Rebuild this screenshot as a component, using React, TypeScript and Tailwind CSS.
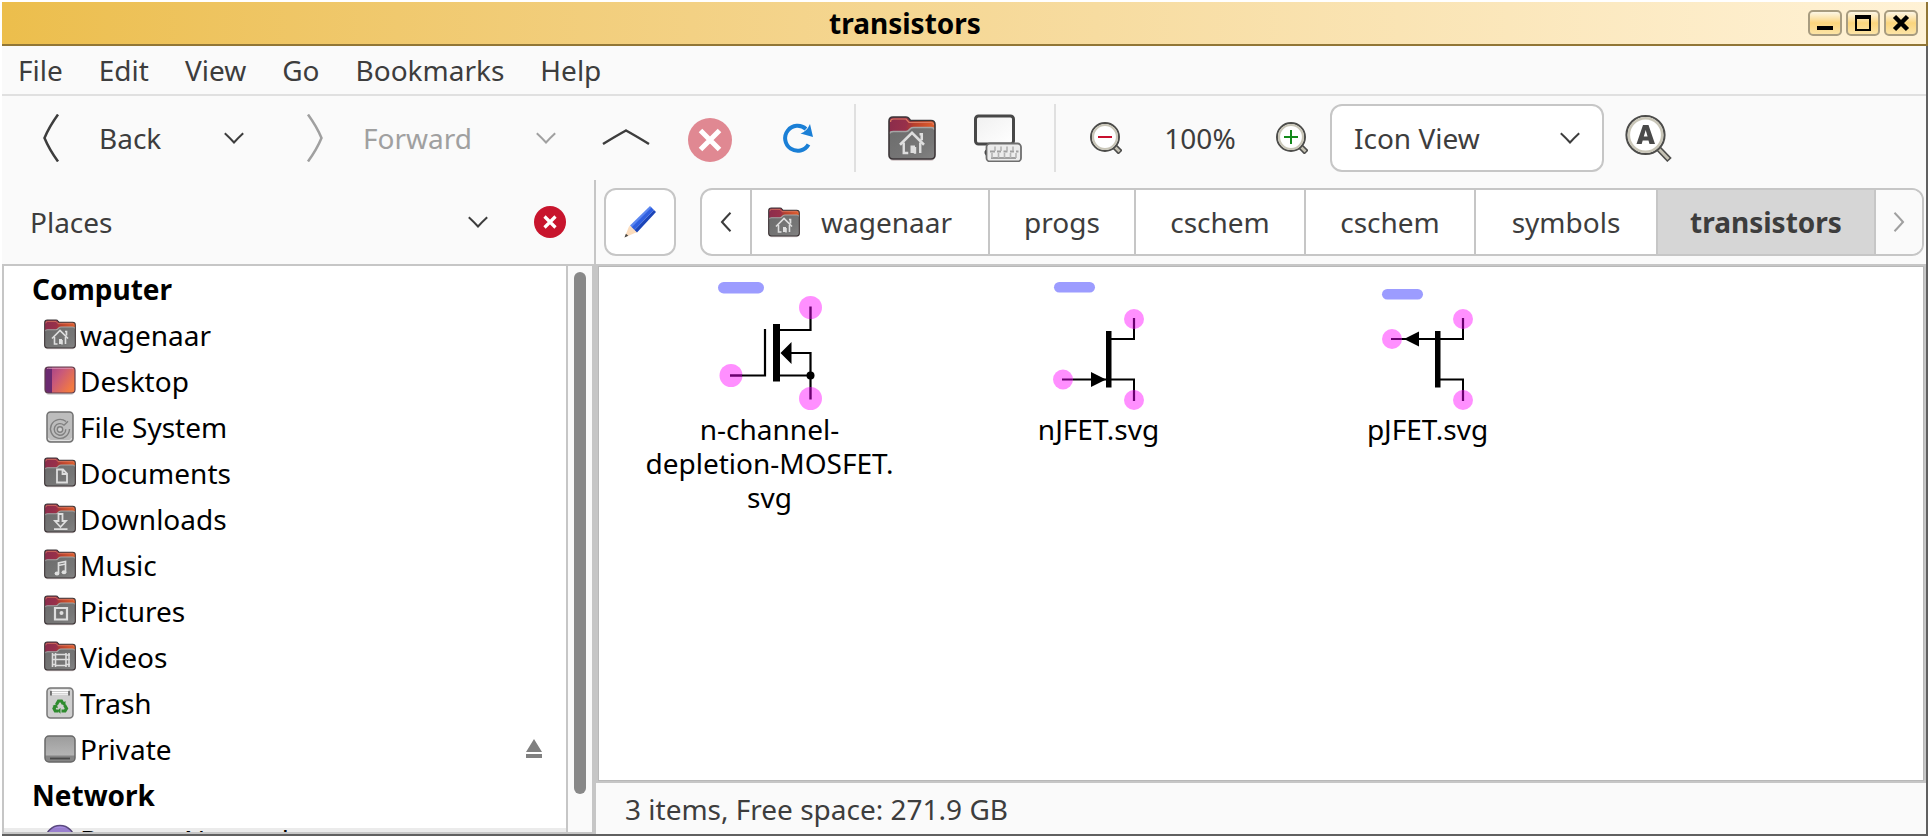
import { Fragment, type ReactNode } from "react";

type Glyph = "home" | "documents" | "downloads" | "music" | "pictures" | "videos";

const glyphs: Record<Glyph, ReactNode> = {
  home: (
    <>
      <path d="M8 18.5 16 10.5 24 18.5M21 11.5h1.5v4" fill="none" stroke="#dedede" strokeWidth="1.7" />
      <path d="M10.5 17v7h3M18 20v4.5M21.5 17v7" fill="none" stroke="#dedede" strokeWidth="1.6" />
      <path d="M15 19h3v5h-3z" fill="#dedede" />
    </>
  ),
  documents: (
    <path d="M13 11.5h6l4 4v9H13zM18.5 11.5v4.5H23" fill="none" stroke="#dedede" strokeWidth="1.8" />
  ),
  downloads: (
    <path d="M14.5 10h4v7H22l-5.500 6-5.500-6h3.500zM10 25.200h13.500" fill="none" stroke="#dedede" strokeWidth="1.800" />
  ),
  music: (
    <>
      <path d="M14.500 23V13l7-1.500V22M14.500 15.500l7-1.500" fill="none" stroke="#dedede" strokeWidth="1.700" />
      <ellipse cx="13" cy="23.500" rx="2.400" ry="2" fill="#dedede" />
      <ellipse cx="20" cy="22.300" rx="2.400" ry="2" fill="#dedede" />
    </>
  ),
  pictures: (
    <>
      <path d="M11 12h12v11.500H11z" fill="none" stroke="#dedede" strokeWidth="2.200" />
      <circle cx="17.500" cy="17" r="2" fill="#dedede" />
    </>
  ),
  videos: (
    <path
      d="M8.500 11v14M25 11v14M11.500 11v14M22 11v14M8 13h4M8 17.500h4M8 22.500h4M22 13h4M22 17.500h4M22 22.500h4M11.500 12.500H22M11.500 23.500H22M11.500 17.500H22"
      fill="none"
      stroke="#dedede"
      strokeWidth="1.600"
    />
  ),
};

function Folder({ glyph, className }: { glyph: Glyph; className: string }) {
  return (
    <svg viewBox="0 0 48 48" className={className} aria-hidden="true">
      <defs>
        <linearGradient id="folder-back" x1="0" x2="1" y1="0" y2="0.200">
          <stop offset="0" stopColor="#8a2c4c" />
          <stop offset="0.400" stopColor="#98304a" />
          <stop offset="0.550" stopColor="#b8402c" />
          <stop offset="1" stopColor="#e2602c" />
        </linearGradient>
        <linearGradient id="folder-front" x1="0" x2="1" y1="0" y2="1">
          <stop offset="0" stopColor="#6c6c6c" />
          <stop offset="0.700" stopColor="#777" />
          <stop offset="1" stopColor="#838383" />
        </linearGradient>
      </defs>
      <rect x="2" y="40" width="44" height="7" rx="3" fill="#d9cfd0" />
      <path d="M1 7q0-4 4-4h13q2 0 3 1.500l1.500 2H43q4 0 4 4V41q0 4-4 4H5q-4 0-4-4z" fill="url(#folder-back)" />
      <path d="M2.500 8q0-3 3-3H18l3 3.500h22q2.500 0 2.500 2.500" fill="none" stroke="#dd7b62" strokeWidth="1.200" />
      <path d="M1 21q0-3.500 4-3.500h13q2 0 3.500-2l1-1q1-1 3-1H43q4 0 4 3.500V41q0 4-4 4H5q-4 0-4-4z" fill="url(#folder-front)" />
      <path d="M1.500 20q0-2.500 4-2.500h12.500q2 0 3.500-2l1-1q1-1 3-1H43q3.500 0 3.500 2.500" fill="none" stroke="#a5a5a5" strokeWidth="1.600" />
      <path d="M1 7q0-4 4-4h13q2 0 3 1.500l1.500 2H43q4 0 4 4V41q0 4-4 4H5q-4 0-4-4z" fill="none" stroke="#3c3638" strokeWidth="1.600" />
      <g transform="translate(0 3) scale(1.500)">{glyphs[glyph]}</g>
    </svg>
  );
}

function DesktopIcon() {
  return (
    <svg viewBox="0 0 32 32" className="size-8" aria-hidden="true">
      <defs>
        <linearGradient id="desk" x1="0" x2="1" y1="0" y2="0.600">
          <stop offset="0" stopColor="#9a3a8c" />
          <stop offset="0.500" stopColor="#c9597a" />
          <stop offset="1" stopColor="#f27a42" />
        </linearGradient>
      </defs>
      <rect x="2" y="24" width="28" height="6" rx="3" fill="#d8d8d8" />
      <rect x="1" y="2" width="30" height="26" rx="3.500" fill="url(#desk)" />
      <path d="M4 2h4v26H4q-3 0-3-3V5q0-3 3-3z" fill="#6b2a70" />
      <path d="M3 4q.5-.8 1.500-.8h23q1 0 1.500.8" fill="none" stroke="#d998b8" strokeWidth="1" />
      <rect x="1" y="2" width="30" height="26" rx="3.500" fill="none" stroke="#5f3d4d" strokeWidth="1.200" />
    </svg>
  );
}

function DiskIcon() {
  return (
    <svg viewBox="0 0 32 32" className="size-8" aria-hidden="true">
      <rect x="3" y="1" width="26" height="30" rx="3.500" fill="#bdbdbd" stroke="#707070" strokeWidth="1.500" />
      <path d="M4.500 27q0 2.500 2.500 2.500h18q2.500 0 2.500-2.500" fill="none" stroke="#e2e2e2" />
      <path d="M22 10.500a9.500 9.500 0 1 0 3.500 7.500M20 14.200a5.800 5.800 0 1 0 1.800 4M20 14.200l4-4" fill="none" stroke="#808080" strokeWidth="1.400" />
      <circle cx="16" cy="18.500" r="2.700" fill="#d0d0d0" stroke="#808080" strokeWidth="1.400" />
    </svg>
  );
}

function TrashIcon() {
  return (
    <svg viewBox="0 0 32 32" className="size-8" aria-hidden="true">
      <rect x="3" y="1" width="26" height="30" rx="3.500" fill="#cfcfcf" stroke="#777" strokeWidth="1.500" />
      <path d="M7.500 2.500h17V8h-17z" fill="#fdfdfd" />
      <path d="M7 4v4.500M25 4v4.500" stroke="#444" strokeWidth="1.300" />
      <path d="M8 4.500h16M8 6.800h16" stroke="#bbb" strokeWidth="0.800" />
      <g fill="none" stroke="#2e8b2e" strokeWidth="3.200">
        <path d="M12.500 17.500l2-3.500h3l1.500 2.500" />
        <path d="M20.500 18l2 3.500-1.500 2.500h-3.500" />
        <path d="M14.500 24h-3.200l-1.300-2.500 1.300-2.500" />
      </g>
      <g fill="#2e8b2e">
        <path d="M21.500 14v5l-4.500-2z" />
        <path d="M16.500 20.800v6l-3-3z" />
        <path d="M8.500 19l4.500-2.200.8 4.500z" />
      </g>
    </svg>
  );
}

function DriveIcon() {
  return (
    <svg viewBox="0 0 32 32" className="size-8" aria-hidden="true">
      <defs>
        <linearGradient id="drive" x1="0" x2="0" y1="0" y2="1">
          <stop offset="0" stopColor="#9c9c9c" />
          <stop offset="1" stopColor="#bdbdbd" />
        </linearGradient>
      </defs>
      <rect x="1" y="3" width="30" height="26" rx="4" fill="url(#drive)" />
      <path d="M1 22.500h30V25q0 4-4 4H5q-4 0-4-4z" fill="#858585" />
      <path d="M6 25.500h20" stroke="#4a4a4a" strokeWidth="1.800" />
      <rect x="1" y="3" width="30" height="26" rx="4" fill="none" stroke="#686868" strokeWidth="1.500" />
    </svg>
  );
}

function NetworkIcon() {
  return (
    <svg viewBox="0 0 32 32" className="size-8" aria-hidden="true">
      <circle cx="16" cy="16" r="14.500" fill="#a68ae0" stroke="#5b4a80" strokeWidth="1.500" />
      <path d="M3 14h26M3 21h26M16 8v22" stroke="#c3aef0" strokeWidth="1.500" />
    </svg>
  );
}

function Down({ className = "" }: { className?: string }) {
  return (
    <svg viewBox="0 0 20 12" className={`h-3 w-5 shrink-0 ${className}`} aria-hidden="true">
      <path d="M.8 1.200Q6 6 10 10.500 14 6 19.200 1.200" fill="none" stroke="currentColor" strokeWidth="2" />
    </svg>
  );
}

function Magnifier({ children }: { children: ReactNode }) {
  return (
    <svg viewBox="0 0 32 32" className="size-8" aria-hidden="true">
      <path d="M24 24l6.500 6.500" stroke="#4c4c4a" strokeWidth="6" />
      <path d="M23 23l6.500 6.500" stroke="#c5c2b4" strokeWidth="2.600" />
      <circle cx="15" cy="15" r="14" fill="#fff" stroke="#4c4c4a" strokeWidth="2" />
      <circle cx="15" cy="15" r="12" fill="none" stroke="#c9c6b8" strokeWidth="2.200" />
      {children}
    </svg>
  );
}

const places: { name: string; icon: ReactNode; eject?: boolean }[] = [
  { name: "wagenaar", icon: <Folder glyph="home" className="mb-0.5 size-8" /> },
  { name: "Desktop", icon: <DesktopIcon /> },
  { name: "File System", icon: <DiskIcon /> },
  { name: "Documents", icon: <Folder glyph="documents" className="mb-0.5 size-8" /> },
  { name: "Downloads", icon: <Folder glyph="downloads" className="mb-0.5 size-8" /> },
  { name: "Music", icon: <Folder glyph="music" className="mb-0.5 size-8" /> },
  { name: "Pictures", icon: <Folder glyph="pictures" className="mb-0.5 size-8" /> },
  { name: "Videos", icon: <Folder glyph="videos" className="mb-0.5 size-8" /> },
  { name: "Trash", icon: <TrashIcon /> },
  { name: "Private", icon: <DriveIcon />, eject: true },
];

const crumbs = [
  { name: "progs", width: "w-[146px]" },
  { name: "cschem", width: "w-[170px]" },
  { name: "cschem", width: "w-[170px]" },
  { name: "symbols", width: "w-[182px]" },
];

const pin = "#ff8fff";

const files: { lines: string[]; art: ReactNode }[] = [
  {
    lines: ["n-channel-", "depletion-MOSFET.", "svg"],
    art: (
      <>
        <rect x="12" y="0" width="46" height="11.500" rx="5.700" fill="#9c9cff" />
        <g fill={pin}>
          <circle cx="104.500" cy="25.500" r="11.500" />
          <circle cx="25" cy="93.500" r="11.500" />
          <circle cx="104.500" cy="116.500" r="11.500" />
        </g>
        <path d="M59 47v46.500H36M74 48h30.500V37M85 71h19.500v34M74 93.500h30.500" fill="none" stroke="#000" strokeWidth="2.200" />
        <path d="M36 93.500H24M104.500 37V24.500M104.500 105v12.500" stroke="#6b0070" strokeWidth="2.400" />
        <path d="M67 42h7v57.500h-7zM74.500 71l11-11v22z" />
        <circle cx="104.500" cy="93.500" r="4" />
      </>
    ),
  },
  {
    lines: ["nJFET.svg"],
    art: (
      <>
        <rect x="19" y="0" width="41" height="10.500" rx="5.200" fill="#9c9cff" />
        <g fill={pin}>
          <circle cx="99" cy="37" r="10" />
          <circle cx="28" cy="97.500" r="10" />
          <circle cx="99" cy="118" r="10" />
        </g>
        <path d="M38 97.500h61V108M76 57h23V47" fill="none" stroke="#000" strokeWidth="2" />
        <path d="M27 97.500h11M99 47V36M99 108v11" stroke="#6b0070" strokeWidth="2.200" />
        <path d="M71 49h5.500v56.500H71zM56 90v15l15-7.500z" />
      </>
    ),
  },
  {
    lines: ["pJFET.svg"],
    art: (
      <>
        <rect x="18" y="7" width="41" height="10.500" rx="5.200" fill="#9c9cff" />
        <g fill={pin}>
          <circle cx="99" cy="37" r="10" />
          <circle cx="28" cy="57" r="10" />
          <circle cx="99" cy="118" r="10" />
        </g>
        <path d="M38 57h61V47M76 97.500h23V108" fill="none" stroke="#000" strokeWidth="2" />
        <path d="M27 57h11M99 47V36M99 108v11" stroke="#6b0070" strokeWidth="2.200" />
        <path d="M71 49h5.500v56.500H71zM55 49.500v15L40 57z" />
      </>
    ),
  },
];

const windowButton =
  "flex h-[26px] w-[34px] items-center justify-center rounded-[5px] border-2 border-[#a89c80] bg-linear-to-b from-[#fdf6e4] via-[#fbd57c] to-[#fce4a6]";

export default function App() {
  return (
    <div className="flex h-screen min-w-[1100px] flex-col overflow-hidden bg-white pt-0.5 pl-0.5 font-['Noto_Sans',sans-serif] text-[28px] leading-[34px] text-[#3d3d3d]">
      <header className="flex h-11 shrink-0 items-center border-r-2 border-b-2 border-[#917636] bg-linear-to-r from-[#ecbe4c] to-[#fff2d6] pr-2">
        <h1 className="flex-1 text-center font-bold text-black">transistors</h1>
        <div className="flex gap-1">
          <button type="button" aria-label="Minimize" className={windowButton}>
            <svg viewBox="0 0 18 18" className="size-[18px]">
              <path d="M1 12h16v4H1z" />
            </svg>
          </button>
          <button type="button" aria-label="Maximize" className={windowButton}>
            <svg viewBox="0 0 18 18" className="size-[18px]">
              <path d="M1 1h16v16H1zM3 5v10h12V5z" fillRule="evenodd" />
            </svg>
          </button>
          <button type="button" aria-label="Close" className={windowButton}>
            <svg viewBox="0 0 18 18" className="size-[18px]">
              <path d="M2.500 2.500l13 13M15.500 2.500l-13 13" stroke="#000" strokeWidth="4.500" />
            </svg>
          </button>
        </div>
      </header>

      <div className="flex min-h-0 flex-1 flex-col border-r-2 border-b-2 border-[#606060] bg-[#fafafa]">
        <nav className="flex h-[50px] shrink-0 items-center gap-9 border-b-2 border-[#e0e0e0] pl-4">
          {["File", "Edit", "View", "Go", "Bookmarks", "Help"].map((item) => (
            <button key={item} type="button">
              {item}
            </button>
          ))}
        </nav>

        <div className="flex h-[84px] shrink-0 items-center">
          <button type="button" className="flex h-full w-[196px] items-center gap-6 pl-[25px]">
            <svg viewBox="0 0 48 48" className="size-12" aria-hidden="true">
              <path d="M31 .5Q22 13 17.500 24 22 35 31 47.500" fill="none" stroke="currentColor" strokeWidth="2.500" />
            </svg>
            Back
          </button>
          <button type="button" aria-label="Back history" className="flex h-full w-[72px] items-center justify-center">
            <Down />
          </button>
          <button type="button" className="flex h-full w-[240px] items-center gap-6 pl-[21px] text-[#a0a0a0]">
            <svg viewBox="0 0 48 48" className="size-12" aria-hidden="true">
              <path d="M17 .5Q26 13 30.500 24 26 35 17 47.500" fill="none" stroke="currentColor" strokeWidth="2.500" />
            </svg>
            Forward
          </button>
          <button type="button" aria-label="Forward history" className="flex h-full w-[72px] items-center justify-center text-[#a0a0a0]">
            <Down />
          </button>
          <button type="button" aria-label="Up" className="flex h-full w-[88px] items-center justify-center">
            <svg viewBox="0 0 48 48" className="size-12" aria-hidden="true">
              <path d="M1 30Q14 22 24 16.500 34 22 47 30" fill="none" stroke="currentColor" strokeWidth="2.500" />
            </svg>
          </button>
          <button type="button" aria-label="Stop" className="flex h-full w-20 items-center justify-center">
            <svg viewBox="0 0 48 48" className="size-12" aria-hidden="true">
              <circle cx="24" cy="26" r="22" fill="#e08892" />
              <path d="M14.500 16.500l19 19M33.500 16.500l-19 19" stroke="#fff" strokeWidth="5" />
            </svg>
          </button>
          <button type="button" aria-label="Reload" className="flex h-full w-24 items-center justify-center">
            <svg viewBox="0 0 32 32" className="size-8" aria-hidden="true">
              <path d="M26.500 22.500A12.500 12.500 0 1 1 24 7" fill="none" stroke="#1a7fd6" strokeWidth="4" />
              <path d="M28 2l3 13-12.500-3.500q6-1.500 9.500-9.500z" fill="#1a7fd6" />
            </svg>
          </button>
          <div className="mx-2 h-[68px] w-0.5 bg-[#e0e0e0]" />
          <button type="button" aria-label="Home" className="flex h-full w-24 items-center justify-center">
            <Folder glyph="home" className="size-12" />
          </button>
          <button type="button" aria-label="Computer" className="flex h-full w-[76px] items-center justify-center">
            <svg viewBox="0 0 48 48" className="size-12" aria-hidden="true">
              <defs>
                <linearGradient id="screen" x1="0" x2="1" y1="0" y2="1">
                  <stop offset="0" stopColor="#f0f0f0" />
                  <stop offset="1" stopColor="#fff" />
                </linearGradient>
              </defs>
              <rect x="1.500" y="2" width="38" height="28" rx="3" fill="url(#screen)" stroke="#474747" strokeWidth="3" />
              <path d="M14 36q-4 1.500-1 5" fill="none" stroke="#333" strokeWidth="2.500" />
              <rect x="12.500" y="29.500" width="34.500" height="18" rx="3.500" fill="#ececec" stroke="#6e6e6e" strokeWidth="1.800" />
              <path d="M16 37.500h5M23 37.500h4M29.500 37.500h4M36 37.500h4M42 37.500h2.500M17 44h25" stroke="#a0a0a0" strokeWidth="1.800" />
              <path d="M21 32.500v4.500M27 32.500v4.500M33 32.500v4.500M39 32.500v4.500M18 39v5M24.500 39v5M30.500 39v5M36.500 39v5M42 39v5" stroke="#b4b4b4" strokeWidth="1.600" />
            </svg>
          </button>
          <div className="mr-[6px] ml-[18px] h-[68px] w-0.5 bg-[#e0e0e0]" />
          <button type="button" aria-label="Zoom out" className="flex h-full w-[88px] items-center justify-center">
            <Magnifier>
              <path d="M8 15h14" stroke="#c8102e" strokeWidth="2" />
            </Magnifier>
          </button>
          <button type="button" className="w-[100px] text-center">
            100%
          </button>
          <button type="button" aria-label="Zoom in" className="ml-1 flex h-full w-[76px] items-center justify-center">
            <Magnifier>
              <path d="M8 15h14M15 8v14" stroke="#138a1c" strokeWidth="2" />
            </Magnifier>
          </button>
          <div className="relative">
            <select
              aria-label="View mode"
              className="h-[68px] w-[274px] appearance-none rounded-[12px] border-2 border-[#c6c6c6] bg-white pl-[22px]"
            >
              <option>Icon View</option>
              <option>List View</option>
              <option>Compact View</option>
            </select>
            <Down className="pointer-events-none absolute top-7 right-6" />
          </div>
          <button type="button" aria-label="Search" className="flex h-full w-[88px] items-center justify-center">
            <svg viewBox="0 0 48 48" className="size-12" aria-hidden="true">
              <path d="M34 34l11.500 12" stroke="#4c4c4a" strokeWidth="6" />
              <path d="M33 33l11.500 12" stroke="#c5c2b4" strokeWidth="2.800" />
              <circle cx="21.500" cy="21" r="19" fill="#fff" stroke="#4c4c4a" strokeWidth="2.200" />
              <circle cx="21.500" cy="21" r="16.700" fill="none" stroke="#c9c6b8" strokeWidth="2.600" />
              <path d="M12.500 30L19 11h5.500L31 30h-5.500l-1-3.500h-5.800l-1 3.500zM19.800 22.500h3.800l-1.900-6.500z" fill="#4a4a4a" fillRule="evenodd" />
            </svg>
          </button>
        </div>

        <div className="flex min-h-0 flex-1">
          <aside className="flex w-[592px] shrink-0 flex-col">
            <div className="flex h-[84px] shrink-0 items-center pr-7 pl-7">
              <h2 className="flex-1">Places</h2>
              <button type="button" aria-label="Choose side pane" className="mr-[46px]">
                <Down />
              </button>
              <button type="button" aria-label="Close side pane">
                <svg viewBox="0 0 32 32" className="size-8" aria-hidden="true">
                  <circle cx="16" cy="16" r="16" fill="#c8152d" />
                  <path d="M10.500 10.500l11 11M21.500 10.500l-11 11" stroke="#fff" strokeWidth="3.200" />
                </svg>
              </button>
            </div>
            <div className="flex min-h-0 flex-1 border-2 border-[#c6c6c6]">
              <div className="relative min-w-0 flex-1 overflow-hidden bg-white text-black">
                <h3 className="flex h-[46px] items-center pl-7 font-bold">Computer</h3>
                <ul>
                  {places.map((place) => (
                    <li key={place.name} className="flex h-[46px] items-center pr-6 pl-10">
                      {place.icon}
                      <a href="#" className="flex-1 pl-1">
                        {place.name}
                      </a>
                      {place.eject && (
                        <button type="button" aria-label="Eject">
                          <svg viewBox="0 0 16 20" className="h-5 w-4">
                            <path d="M8 0l8 13H0zM0 15h16v4H0z" fill="#808080" />
                          </svg>
                        </button>
                      )}
                    </li>
                  ))}
                </ul>
                <h3 className="flex h-[46px] items-center pl-7 font-bold">Network</h3>
                <div className="flex h-11 items-center pl-10">
                  <NetworkIcon />
                  <a href="#" className="pl-1">
                    Browse Network
                  </a>
                </div>
                <div className="pointer-events-none absolute inset-x-0 bottom-0 h-1 bg-black/8" />
              </div>
              <div className="flex w-[26px] flex-col border-l-2 border-[#c6c6c6] bg-[#fafafa] px-1.5 pt-1.5 pb-[38px]">
                <div className="flex-1 rounded-full bg-[#888]" />
              </div>
            </div>
          </aside>

          <main className="flex min-w-0 flex-1 flex-col border-l-2 border-[#c6c6c6]">
            <div className="flex h-[84px] shrink-0 items-center gap-6 pr-0.5 pl-2">
              <button
                type="button"
                aria-label="Edit location"
                className="flex h-[68px] w-[72px] shrink-0 items-center justify-center rounded-[12px] border-2 border-[#c6c6c6] bg-white"
              >
                <svg viewBox="0 0 32 32" className="size-8" aria-hidden="true">
                  <path d="M.5 31.500L5 20.500l7 6z" fill="#fbdcbc" />
                  <path d="M.5 31.500l1.400-3.800 2.400 2z" fill="#444" />
                  <path d="M6 19.500L26 0l2 2-20 20.500z" fill="#5b86f0" />
                  <path d="M7.500 21.500L27.500 1.500l2.500 2.500-20 20.500z" fill="#2f5fe0" />
                  <path d="M10 24.500L30 4l2 2-19 20.500z" fill="#1c45b8" />
                  <path d="M5 20.500l1-1 7 7-1 .5z" fill="#fbdcbc" />
                </svg>
              </button>
              <div className="flex h-[68px] min-w-0 flex-1 overflow-hidden rounded-[12px] border-2 border-[#c6c6c6] bg-white">
                <button type="button" aria-label="Scroll left" className="flex w-[50px] shrink-0 items-center justify-center border-r-2 border-[#c6c6c6]">
                  <svg viewBox="0 0 12 20" className="h-5 w-3">
                    <path d="M10.500 .8Q5.500 6 2 10q3.500 4 8.500 9.200" fill="none" stroke="currentColor" strokeWidth="2" />
                  </svg>
                </button>
                <button type="button" className="flex w-[238px] shrink-0 items-center gap-[21px] border-r-2 border-[#c6c6c6] pl-4">
                  <Folder glyph="home" className="size-8" />
                  wagenaar
                </button>
                {crumbs.map((crumb, index) => (
                  <button key={index} type="button" className={`${crumb.width} shrink-0 border-r-2 border-[#c6c6c6]`}>
                    {crumb.name}
                  </button>
                ))}
                <button type="button" className="min-w-0 flex-1 border-r-2 border-[#c6c6c6] bg-[#d6d6d6] font-bold">
                  transistors
                </button>
                <button type="button" aria-label="Scroll right" className="flex w-[46px] shrink-0 items-center justify-center bg-[#fafafa] text-[#a0a0a0]">
                  <svg viewBox="0 0 12 20" className="h-5 w-3">
                    <path d="M1.500 .8Q6.500 6 10 10q-3.500 4-8.500 9.200" fill="none" stroke="currentColor" strokeWidth="2" />
                  </svg>
                </button>
              </div>
            </div>

            <ul className="flex min-h-0 flex-1 items-start border-2 border-[#c6c6c6] bg-white pt-4 pl-[7px] text-black inset-shadow-[0_0_0_1px_#b8b8b8]">
              {files.map((file) => (
                <li key={file.lines[0]} className="flex w-[329px] flex-col items-center gap-0.5">
                  <svg viewBox="0 0 128 128" className="size-32" aria-hidden="true">
                    {file.art}
                  </svg>
                  <a href="#" className="text-center">
                    {file.lines.map((line, index) => (
                      <Fragment key={line}>
                        {index > 0 && <br />}
                        {line}
                      </Fragment>
                    ))}
                  </a>
                </li>
              ))}
            </ul>

            <footer className="flex h-[51px] shrink-0 items-center pl-[29px]">3 items, Free space: 271.9 GB</footer>
          </main>
        </div>
      </div>
    </div>
  );
}
